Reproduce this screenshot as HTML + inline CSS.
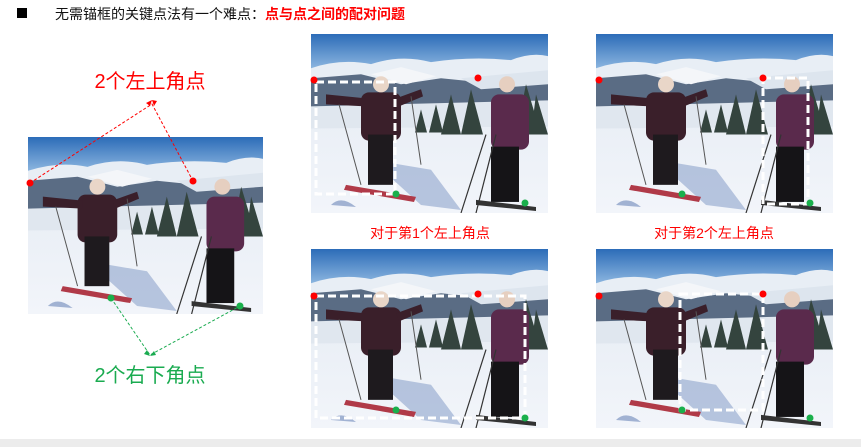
<!DOCTYPE html>
<html><head><meta charset="utf-8"><style>
html,body{margin:0;padding:0;background:#fff;width:861px;height:447px;overflow:hidden}
svg{display:block}
text{font-family:"Liberation Sans","Noto Sans CJK SC",sans-serif}
</style></head><body>
<svg width="861" height="447" viewBox="0 0 861 447" xmlns="http://www.w3.org/2000/svg">
<defs>
<linearGradient id="sky" x1="0" y1="0" x2="0" y2="1">
<stop offset="0" stop-color="#2c6cb8"/><stop offset="1" stop-color="#9cc2e6"/></linearGradient>
<linearGradient id="snow" x1="0" y1="0" x2="0" y2="1">
<stop offset="0" stop-color="#e2e9f2"/><stop offset="1" stop-color="#f2f5fa"/></linearGradient>
<symbol id="scene" viewBox="0 0 237 178" preserveAspectRatio="none">
<rect width="237" height="178" fill="url(#snow)"/>
<rect width="237" height="40" fill="url(#sky)"/>
<path d="M0 34 Q30 24 60 30 Q90 20 120 28 Q160 22 200 26 Q220 18 237 22 V55 H0Z" fill="#e8eef5"/>
<path d="M0 44 L50 40 L90 50 L130 44 L170 48 L237 40 V75 H0Z" fill="#5a6c84"/>
<path d="M60 40 L90 33 L125 42 L95 50Z" fill="#f4f6f9"/>
<path d="M150 44 L237 36 V50 L170 55Z" fill="#dde5ee"/>
<path d="M0 72 L237 66 V92 L0 94Z" fill="#e0e7ef"/>
<path d="M110 75 L116 98 L104 98Z M125 70 L132 98 L118 98Z M140 60 L150 100 L130 100Z M160 55 L172 100 L150 100Z M215 50 L230 100 L205 100Z M225 60 L237 100 L220 100Z" fill="#34443e"/>
<path d="M60 125 L120 135 L150 175 L110 170Z" fill="#8ea4cc" opacity=".6"/>
<path d="M20 170 Q30 160 45 172Z" fill="#7f96c2" opacity=".7"/>
<rect x="50" y="58" width="40" height="48" rx="8" fill="#3a1f2a"/>
<path d="M15 60 L55 64 L55 72 L15 70Z M85 64 L110 55 L112 62 L88 72Z" fill="#3a1f2a"/>
<circle cx="70" cy="50" r="8" fill="#e9d6c8"/>
<rect x="57" y="100" width="25" height="50" fill="#1e1a1e"/>
<path d="M35 150 L105 162 L103 167 L33 155Z" fill="#b03a48"/>
<path d="M28 70 L50 150 M100 62 L110 130" stroke="#555" stroke-width="1"/>
<rect x="180" y="60" width="38" height="55" rx="8" fill="#5a2a4c"/>
<circle cx="196" cy="50" r="8" fill="#e6cfc0"/>
<rect x="180" y="112" width="28" height="55" fill="#151417"/>
<path d="M165 165 L225 172 L225 176 L165 170Z" fill="#333"/>
<path d="M175 100 L150 178 M185 100 L165 178" stroke="#333" stroke-width="1.2"/>
</symbol>
</defs>

<rect x="17" y="8" width="10" height="10" fill="#000"/>
<text x="55" y="19" font-size="14" fill="#111">无需锚框的关键点法有一个难点：<tspan fill="#f00" font-weight="bold">点与点之间的配对问题</tspan></text>

<use href="#scene" x="28" y="137" width="235" height="177"/>
<use href="#scene" x="311" y="34" width="237" height="179"/>
<use href="#scene" x="596" y="34" width="237" height="179"/>
<use href="#scene" x="311" y="249" width="237" height="179"/>
<use href="#scene" x="596" y="249" width="237" height="179"/>

<text x="150" y="88" font-size="20" fill="#f00" text-anchor="middle">2个左上角点</text>
<text x="150" y="382" font-size="20" fill="#1aab50" text-anchor="middle">2个右下角点</text>
<text x="430" y="238" font-size="14" fill="#f00" text-anchor="middle">对于第1个左上角点</text>
<text x="714" y="238" font-size="14" fill="#f00" text-anchor="middle">对于第2个左上角点</text>

<g stroke-dasharray="3,2" stroke-width="1" fill="none">
<path d="M30 183 L152 104 L193 181" stroke="#f00"/>
<path d="M111 298 L150 355 L240 306" stroke="#1aab50"/>
</g>
<path d="M152 100 l-6 3 l4 3z M152 100 l2 6 l3 -5z" fill="#f00"/>
<path d="M150 356 l-6 -2 l3 -4z M150 356 l4 -5 l2 4z" fill="#1aab50"/>

<g stroke="#fff" stroke-width="3" stroke-dasharray="8,4" fill="none">
<rect x="316" y="82" width="79" height="112"/>
<rect x="763" y="78" width="45" height="126"/>
<rect x="316" y="296" width="209" height="122"/>
<rect x="680" y="294" width="83" height="116"/>
</g>

<g fill="#f00">
<circle cx="30" cy="183" r="3.5"/><circle cx="193" cy="181" r="3.5"/>
<circle cx="314" cy="80" r="3.5"/><circle cx="478" cy="78" r="3.5"/>
<circle cx="599" cy="80" r="3.5"/><circle cx="763" cy="78" r="3.5"/>
<circle cx="314" cy="296" r="3.5"/><circle cx="478" cy="294" r="3.5"/>
<circle cx="599" cy="296" r="3.5"/><circle cx="763" cy="294" r="3.5"/>
</g>
<g fill="#1ab04c">
<circle cx="111" cy="298" r="3.5"/><circle cx="240" cy="306" r="3.5"/>
<circle cx="396" cy="194" r="3.5"/><circle cx="525" cy="203" r="3.5"/>
<circle cx="682" cy="194" r="3.5"/><circle cx="810" cy="203" r="3.5"/>
<circle cx="396" cy="410" r="3.5"/><circle cx="525" cy="418" r="3.5"/>
<circle cx="682" cy="410" r="3.5"/><circle cx="810" cy="418" r="3.5"/>
</g>

<rect x="0" y="439" width="861" height="8" fill="#ececec"/>
</svg>
</body></html>
